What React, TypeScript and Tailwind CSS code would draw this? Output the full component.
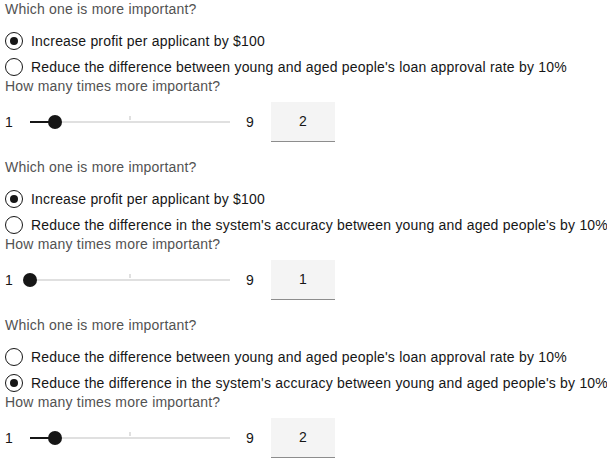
import React from "react";

type Q = { options: string[]; selected: number; value: number };

const questions: Q[] = [
  {
    options: [
      "Increase profit per applicant by $100",
      "Reduce the difference between young and aged people's loan approval rate by 10%",
    ],
    selected: 0,
    value: 2,
  },
  {
    options: [
      "Increase profit per applicant by $100",
      "Reduce the difference in the system's accuracy between young and aged people's by 10%",
    ],
    selected: 0,
    value: 1,
  },
  {
    options: [
      "Reduce the difference between young and aged people's loan approval rate by 10%",
      "Reduce the difference in the system's accuracy between young and aged people's by 10%",
    ],
    selected: 1,
    value: 2,
  },
];

function Radio({ checked, label }: { checked: boolean; label: string }) {
  return (
    <div className="flex h-[18px] items-center">
      <span className="flex h-[18px] w-[18px] shrink-0 items-center justify-center rounded-full border border-[#161616]">
        {checked && <span className="h-[8px] w-[8px] rounded-full bg-[#161616]" />}
      </span>
      <span className="ml-[8px] whitespace-nowrap text-[14px] leading-[18px] tracking-[0.2px] text-[#161616]">
        {label}
      </span>
    </div>
  );
}

function Slider({ value }: { value: number }) {
  const pct = ((value - 1) / 8) * 100;
  return (
    <div className="mt-[7px] flex h-[40px] items-center">
      <span className="w-[8px] text-center text-[14px] leading-[18px] text-[#161616]">1</span>
      <div className="relative ml-[17px] h-[14px] w-[200px]">
        <div className="absolute left-0 right-0 top-[6px] h-[2px] bg-[#e0e0e0]" />
        <div className="absolute left-[99px] top-[1px] h-[4px] w-[2px] bg-[#e0e0e0]" />
        <div className="absolute left-0 top-[6px] h-[2px] bg-[#161616]" style={{ width: `${pct}%` }} />
        <div
          className="absolute top-0 h-[14px] w-[14px] -translate-x-1/2 rounded-full bg-[#161616]"
          style={{ left: `${pct}%` }}
        />
      </div>
      <span className="ml-[16px] w-[8px] text-center text-[14px] leading-[18px] text-[#161616]">9</span>
      <div className="ml-[17px] flex h-[40px] w-[64px] items-center justify-center border-b border-[#8d8d8d] bg-[#f4f4f4] text-[14px] text-[#161616]">
        {value}
      </div>
    </div>
  );
}

export default function App() {
  return (
    <div
      className="flex w-[607px] flex-col gap-[16px] overflow-hidden bg-white pl-[5px]"
      style={{ fontFamily: '"Liberation Sans", Arial, sans-serif' }}
    >
      {questions.map((q, i) => (
        <div key={i} className="flex flex-col">
          <div className="h-[18px] whitespace-nowrap text-[14px] leading-[18px] tracking-[0.2px] text-[#525252]">
            Which one is more important?
          </div>
          <div className="mt-[14px] flex flex-col gap-[8px]">
            {q.options.map((o, j) => (
              <Radio key={j} checked={q.selected === j} label={o} />
            ))}
          </div>
          <div className="mt-[1px] h-[18px] whitespace-nowrap text-[14px] leading-[18px] tracking-[0.2px] text-[#525252]">
            How many times more important?
          </div>
          <Slider value={q.value} />
        </div>
      ))}
    </div>
  );
}
